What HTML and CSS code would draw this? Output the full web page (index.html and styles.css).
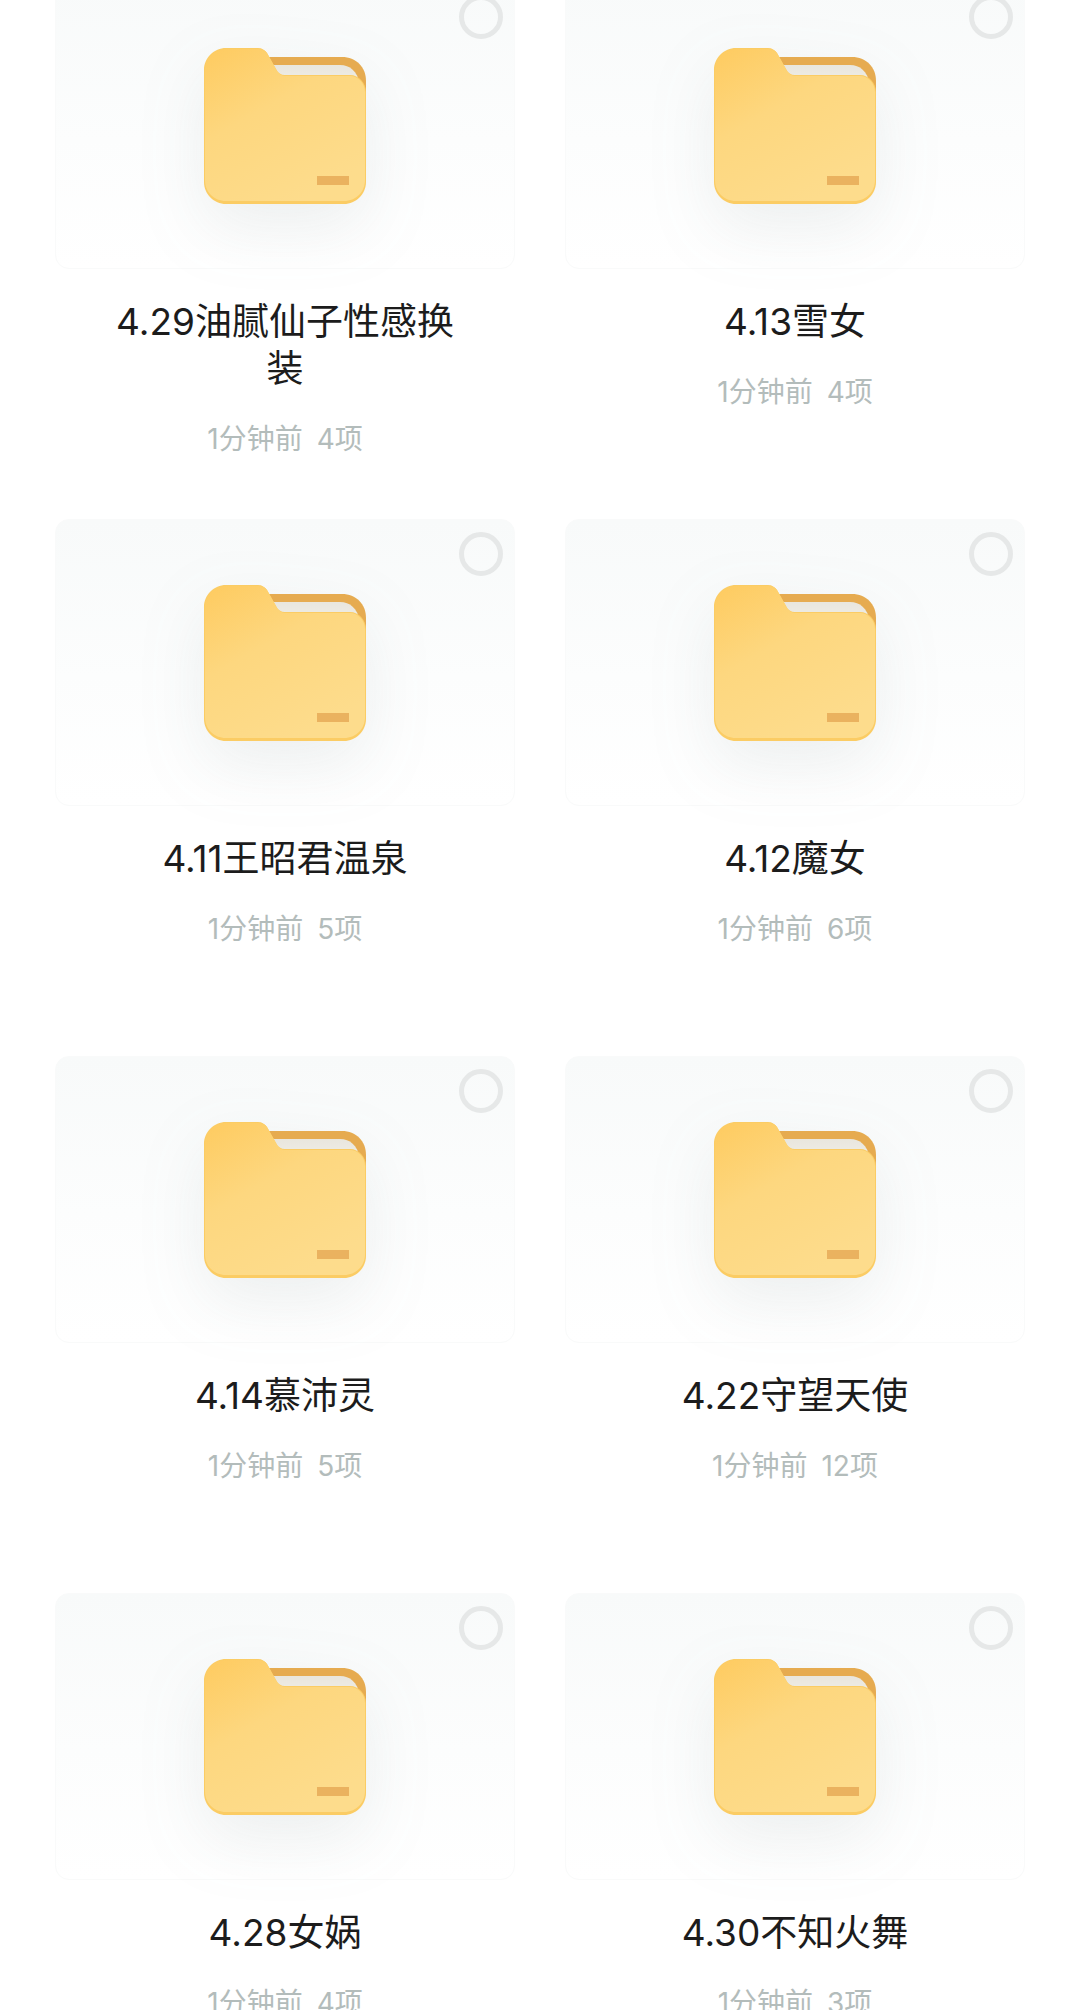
FILE: index.html
```html
<!DOCTYPE html>
<html lang="zh-CN">
<head>
    <meta charset="UTF-8">
    <title>文件夹</title>
    <link rel="stylesheet" href="styles.css">
</head>
<body>
    <svg class="defs" width="0" height="0">
        <defs>
            <linearGradient id="front" x1="0" y1="0" x2="0.6" y2="1">
                <stop offset="0" stop-color="#fecb60"/>
                <stop offset="0.45" stop-color="#fdd77f"/>
                <stop offset="1" stop-color="#fddc8c"/>
            </linearGradient>
            <linearGradient id="gap" x1="0" y1="0" x2="0" y2="1">
                <stop offset="0" stop-color="#e9e6dd"/>
                <stop offset="1" stop-color="#f8f7f2"/>
            </linearGradient>
            <symbol id="folder" viewBox="0 0 162 156">
                <path d="M40 9H138C152 9 162 19 162 33V60H40Z" fill="#e6ab50"/>
                <path d="M60 17H136C146 17 153 23 156 36V60H60Z" fill="url(#gap)"/>
                <path d="M22 0H54C58 0 61 2 63 5L72 21C74 25 77 27 81 27H146C155 27 162 35 162 44V134C162 146 152 156 140 156H22C10 156 0 146 0 134V22C0 10 10 0 22 0Z" fill="#fbcc64"/>
                <path d="M22 1H54C58 1 61 2 63 5L72 21C74 25 77 28 81 28H146C154 28 161 35 161 44V132C161 144 152 153 140 153H22C10 153 1 144 1 132V22C1 10 10 1 22 1Z" fill="url(#front)"/>
                <rect x="113" y="128" width="32" height="9" fill="#eab25f"/>
            </symbol>
        </defs>
    </svg>

    <div class="grid">
        <div class="item">
            <div class="card">
                <span class="check"></span>
                <svg class="folder"><use href="#folder"/></svg>
            </div>
            <div class="name">4.29油腻仙子性感换装</div>
            <div class="meta">1分钟前<span class="count">4项</span></div>
        </div>
        <div class="item">
            <div class="card">
                <span class="check"></span>
                <svg class="folder"><use href="#folder"/></svg>
            </div>
            <div class="name">4.13雪女</div>
            <div class="meta">1分钟前<span class="count">4项</span></div>
        </div>
        <div class="item">
            <div class="card">
                <span class="check"></span>
                <svg class="folder"><use href="#folder"/></svg>
            </div>
            <div class="name">4.11王昭君温泉</div>
            <div class="meta">1分钟前<span class="count">5项</span></div>
        </div>
        <div class="item">
            <div class="card">
                <span class="check"></span>
                <svg class="folder"><use href="#folder"/></svg>
            </div>
            <div class="name">4.12魔女</div>
            <div class="meta">1分钟前<span class="count">6项</span></div>
        </div>
        <div class="item">
            <div class="card">
                <span class="check"></span>
                <svg class="folder"><use href="#folder"/></svg>
            </div>
            <div class="name">4.14慕沛灵</div>
            <div class="meta">1分钟前<span class="count">5项</span></div>
        </div>
        <div class="item">
            <div class="card">
                <span class="check"></span>
                <svg class="folder"><use href="#folder"/></svg>
            </div>
            <div class="name">4.22守望天使</div>
            <div class="meta">1分钟前<span class="count">12项</span></div>
        </div>
        <div class="item">
            <div class="card">
                <span class="check"></span>
                <svg class="folder"><use href="#folder"/></svg>
            </div>
            <div class="name">4.28女娲</div>
            <div class="meta">1分钟前<span class="count">4项</span></div>
        </div>
        <div class="item">
            <div class="card">
                <span class="check"></span>
                <svg class="folder"><use href="#folder"/></svg>
            </div>
            <div class="name">4.30不知火舞</div>
            <div class="meta">1分钟前<span class="count">3项</span></div>
        </div>
    </div>
</body>
</html>
```

FILE: styles.css
```css
*{
    margin: 0;
    padding: 0;
    box-sizing: border-box;
}
html, body{
    height: 2010px;
    overflow: hidden;
    background: #fff;
}
body{
    font-family: Inter, "Noto Sans CJK SC", sans-serif;
}
.defs{
    display: block;
}
.grid{
    display: grid;
    grid-template-columns: 460px 460px;
    grid-auto-rows: 537px;
    column-gap: 50px;
    padding-left: 55px;
    margin-top: -18px;
}
.item{
    text-align: center;
}
.card{
    position: relative;
    height: 287px;
    padding-top: 65px;
    border: 1px solid #f9fafa;
    border-radius: 14px;
    background: linear-gradient(180deg, #f8fafa 0%, #fcfdfd 55%, #fff 100%);
}
.check{
    position: absolute;
    top: 12px;
    right: 11px;
    width: 44px;
    height: 44px;
    border: 5px solid #e6e8e8;
    border-radius: 50%;
}
.folder{
    display: block;
    width: 162px;
    height: 156px;
    margin-left: 148px;
    filter: drop-shadow(0 24px 32px rgba(90, 110, 110, .1));
}
.name{
    padding: 29px 50px 0;
    font-size: 37px;
    line-height: 47px;
    color: #1c1c1c;
}
.meta{
    margin-top: 28px;
    font-size: 28px;
    line-height: 38px;
    color: #b3bcbb;
}
.count{
    margin-left: 14px;
}
```
